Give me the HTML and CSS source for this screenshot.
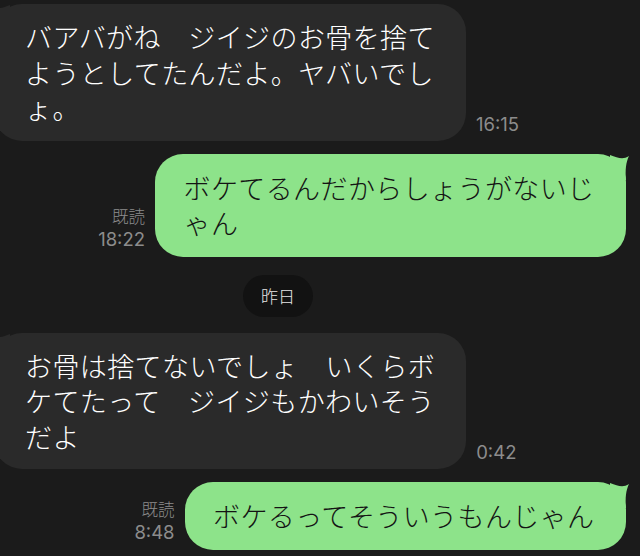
FILE: index.html
```html
<!DOCTYPE html>
<html lang="ja">
<head>
<meta charset="utf-8">
<link rel="stylesheet" href="styles.css">
</head>
<body>
<div class="chat">
  <div class="row row-in gap-after-in">
    <div class="bubble bubble-in">バアバがね　ジイジのお骨を捨て<br>ようとしてたんだよ。ヤバいでし<br>ょ。<svg class="tail tail-in" width="20" height="26" viewBox="0 0 20 26"><path d="M20 1 C12 4 7 6 1 2 C4 8 5 16 4 26 L20 26 Z"/></svg></div>
    <span class="time time-in">16:15</span>
  </div>
  <div class="row row-out gap-after-out1">
    <div class="meta"><span class="read">既読</span><span class="time">18:22</span></div>
    <div class="bubble bubble-out">ボケてるんだからしょうがないじ<br>ゃん<svg class="tail tail-out" width="20" height="26" viewBox="0 0 20 26"><path d="M0 1 C8 4 13 6 19 2 C16 8 15 16 16 26 L0 26 Z"/></svg></div>
  </div>
  <div class="date-row">
    <span class="date-pill">昨日</span>
  </div>
  <div class="row row-in gap-after-in">
    <div class="bubble bubble-in">お骨は捨てないでしょ　いくらボ<br>ケてたって　ジイジもかわいそう<br>だよ<svg class="tail tail-in" width="20" height="26" viewBox="0 0 20 26"><path d="M20 1 C12 4 7 6 1 2 C4 8 5 16 4 26 L20 26 Z"/></svg></div>
    <span class="time time-in">0:42</span>
  </div>
  <div class="row row-out">
    <div class="meta"><span class="read">既読</span><span class="time">8:48</span></div>
    <div class="bubble bubble-out">ボケるってそういうもんじゃん<svg class="tail tail-out" width="20" height="26" viewBox="0 0 20 26"><path d="M0 1 C8 4 13 6 19 2 C16 8 15 16 16 26 L0 26 Z"/></svg></div>
  </div>
</div>
</body>
</html>
```

FILE: styles.css
```css
html, body {
  margin: 0;
  padding: 0;
  background: #1b1b1b;
  overflow: hidden;
}

.chat {
  padding: 4px 14px 0 0;
  display: flex;
  flex-direction: column;
}

.row {
  display: flex;
  align-items: flex-end;
}

.row-out {
  justify-content: flex-end;
}

.gap-after-in {
  margin-bottom: 13px;
}

.gap-after-out1 {
  margin-bottom: 18px;
}

.bubble {
  position: relative;
  white-space: nowrap;
  font-family: "Noto Sans CJK JP", "Noto Sans", sans-serif;
  font-weight: 300;
  font-size: 27px;
  letter-spacing: 0.4px;
  line-height: 35.5px;
  border-radius: 28px;
}

.bubble-in {
  background: #2a2a2a;
  color: #ffffff;
  margin-left: -6px;
  padding: 15px 31px 15px 31px;
}

.bubble-out {
  background: #8de38a;
  color: #141414;
  padding: 16px 31.5px 16px 28.5px;
}

.tail {
  position: absolute;
  top: 0;
}

.tail-in {
  left: -4px;
  fill: #2a2a2a;
}

.tail-out {
  right: -4px;
  fill: #8de38a;
}

.time {
  font-family: Inter, "Liberation Sans", sans-serif;
  font-size: 18.5px;
  color: #8c8c8c;
}

.time-in {
  line-height: 18px;
  margin-left: 10px;
  margin-bottom: 8px;
}

.meta {
  display: flex;
  flex-direction: column;
  align-items: flex-end;
  line-height: 23px;
  margin-right: 10px;
  margin-bottom: 6px;
}

.read {
  font-family: "Noto Sans CJK JP", sans-serif;
  font-weight: 300;
  font-size: 16.5px;
  color: #8c8c8c;
}

.date-row {
  display: flex;
  padding-left: 243px;
  margin-bottom: 16px;
}

.date-pill {
  background: #121212;
  color: #e6e6e6;
  font-family: "Noto Sans CJK JP", sans-serif;
  font-weight: 300;
  font-size: 17px;
  line-height: 42px;
  padding: 0 18px;
  border-radius: 21px;
}
```
